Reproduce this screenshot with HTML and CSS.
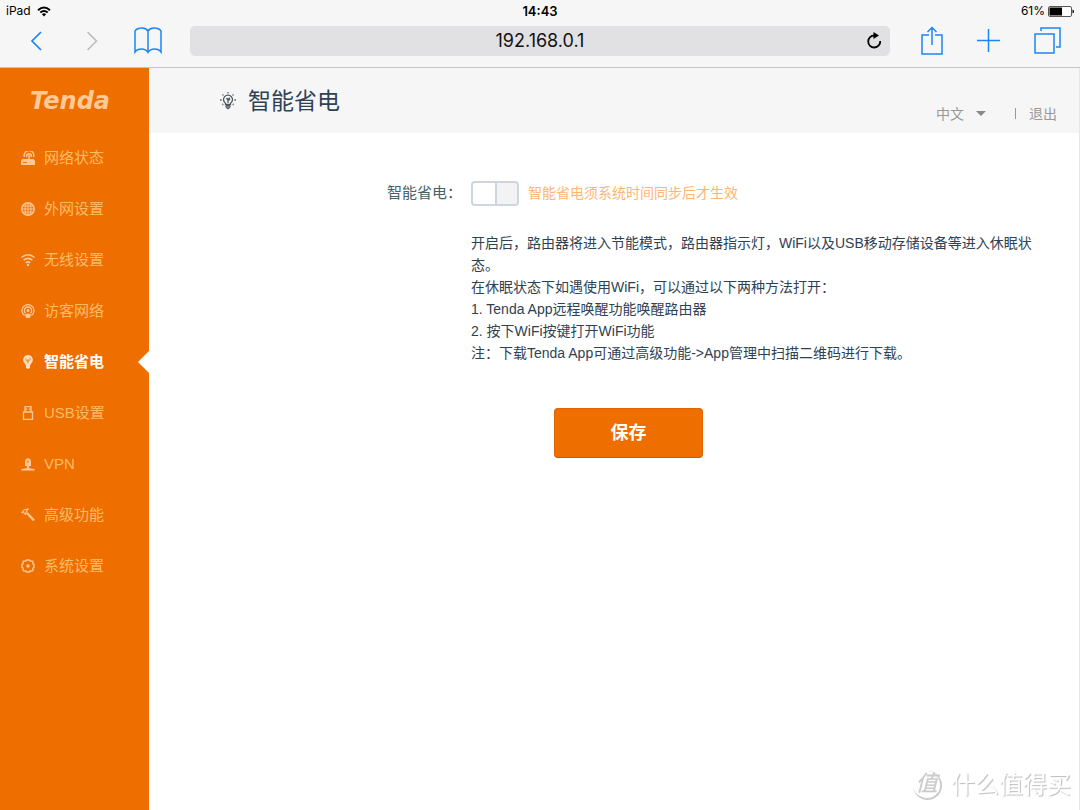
FILE: index.html
```html
<!DOCTYPE html>
<html lang="zh-CN">
<head>
<meta charset="utf-8">
<meta name="viewport" content="width=device-width, initial-scale=1">
<title>智能省电</title>
<link rel="stylesheet" href="styles.css">
</head>
<body>
<header class="browser">
  <div class="status">
    <div class="status-left"><span>iPad</span>
      <svg width="14" height="11" viewBox="0 0 14 11" fill="none" stroke="#000" stroke-width="2"><path d="M1 4.2Q7-1.2 13 4.2M3.3 6.6Q7 3.4 10.7 6.6"/><path d="M4.9 8.2Q7 6.4 9.1 8.2L7 10.6z" fill="#000" stroke="none"/></svg>
    </div>
    <div class="status-time">14:43</div>
    <div class="status-right"><span>61%</span>
      <svg width="26" height="11" viewBox="0 0 26 11"><rect x=".5" y=".5" width="23" height="10" rx="1.5" fill="#fff" stroke="#555"/><path d="M1.5 1.5h12.500v8H1.500z"/><path d="M24.500 3.500q1.500.5 1.500 2t-1.500 2z"/></svg>
    </div>
  </div>
  <div class="toolbar">
    <div class="tools-left">
      <button class="tool" aria-label="后退"><svg width="12" height="20" viewBox="0 0 12 20"><path d="M11 1L2 10l9 9" stroke-width="1.7"/></svg></button>
      <button class="tool forward" aria-label="前进"><svg width="12" height="20" viewBox="0 0 12 20"><path d="M1.500 1l9 9-9 9" stroke-width="1.5"/></svg></button>
      <button class="tool" aria-label="书签"><svg width="28" height="27" viewBox="0 0 28 27"><path d="M14 4Q12 1 8 1 3 1 1 4v21q2-3 6.500-3 4.500 0 6.500 3.500Q16 22 20.500 22q4.500 0 6.500 3V4q-2-3-7-3-4 0-6 3v21.500"/></svg></button>
    </div>
    <div class="address">
      <input class="url" type="text" value="192.168.0.1" aria-label="地址">
      <button class="reload" aria-label="刷新"><svg width="16" height="17" viewBox="0 0 16 17"><path d="M8.500 3.500A6 6 0 1 0 14.200 9" fill="none" stroke="#000" stroke-width="1.800"/><path d="M7.500 0l5.500 3.500L7.500 7z"/></svg></button>
    </div>
    <div class="tools-right">
      <button class="tool" aria-label="分享"><svg width="22" height="29" viewBox="0 0 22 29"><path d="M8 9H1v19h20V9h-7M11 19V1.500M6.500 6L11 1.500 15.500 6"/></svg></button>
      <button class="tool" aria-label="新标签页"><svg width="23" height="23" viewBox="0 0 23 23"><path d="M11.500 0v23M0 11.500h23"/></svg></button>
      <button class="tool" aria-label="标签页"><svg width="27" height="27" viewBox="0 0 27 27"><path d="M1 7h19v19H1zM7 4V1h19v19h-4"/></svg></button>
    </div>
  </div>
</header>

<div class="app">
  <aside class="sidebar">
    <div class="logo">Tenda</div>
    <nav class="menu">
      <a class="item" href="#"><svg class="icon" viewBox="0 0 14 14"><path class="solid" d="M1.500 8h11L14 9.500V14H0V9.500z"/><path d="M3.500 6a4.800 4.800 0 1 1 9 0M5.800 6a2.400 2.400 0 1 1 4.400 0M8 4v4" stroke-width="1.500"/><path d="M2 11.500h4" stroke="#ee6e00"/></svg>网络状态</a>
      <a class="item" href="#"><svg class="icon" viewBox="0 0 14 14"><circle cx="7" cy="7" r="6.200" stroke-width="1.500"/><ellipse cx="7" cy="7" rx="3" ry="6.200"/><path d="M7 1v12M1 7h12M1.800 4h10.400M1.800 10h10.400"/></svg>外网设置</a>
      <a class="item" href="#"><svg class="icon" viewBox="0 0 14 14"><path d="M.5 4.500q6.500-5.500 13 0M2.700 7.200q4.300-3.600 8.600 0M4.800 9.800q2.200-1.800 4.400 0" stroke-width="1.600"/><circle class="solid" cx="7" cy="12" r="1.300"/></svg>无线设置</a>
      <a class="item" href="#"><svg class="icon" viewBox="0 0 14 14"><path d="M3.500 11.500a6 6 0 1 1 7 0M4.500 9.200a3.600 3.600 0 1 1 5 0" stroke-width="1.300"/><circle class="solid" cx="7" cy="6.500" r="1.500"/><path class="solid" d="M4 10.500q3-2 6 0L9 14H5z"/></svg>访客网络</a>
      <a class="item current" href="#" aria-current="page"><svg class="icon" viewBox="0 0 14 14"><path class="solid" d="M7 0a4.900 4.900 0 0 1 3.400 8.300L9 10.500V13l-2 1-2-1v-2.500L3.600 8.300A4.900 4.900 0 0 1 7 0z"/><path d="M7 8.500V4M4.800 3.500Q4.500 6 7 6.500M8.800 2.500q1.200 3-1.800 3.500" stroke="#ee6e00" stroke-width=".8"/></svg>智能省电</a>
      <a class="item" href="#"><svg class="icon" viewBox="0 0 14 14"><path d="M4 6V.7h6V6M2.500 6h9v7.300h-9zM5.500 2.500v1.500M8.500 2.500v1.500" stroke-width="1.300"/></svg>USB设置</a>
      <a class="item" href="#"><svg class="icon" viewBox="0 0 14 14"><path class="solid" d="M4 5.500a3 4.200 0 0 1 6 0V9H8.200v2.300l5.300.7v1.500H.5V12l5.300-.7V9H4z"/><path d="M7 3.500v2.500" stroke="#ee6e00"/></svg>VPN</a>
      <a class="item" href="#"><svg class="icon" viewBox="0 0 14 14"><path d="M1 4.500L3.500 1.700 7 1 5.500 3.300 4.500 6.200 3 5z" stroke-width="1.200"/><path d="M6 5l7 7.500" stroke-width="2.400"/></svg>高级功能</a>
      <a class="item" href="#"><svg class="icon" viewBox="0 0 14 14"><path d="M5.500 1h3l.7 1.200 1.900-.3 1 1-.3 1.900L13 5.500v3l-1.200.7.3 1.900-1 1-1.900-.3-.7 1.200h-3l-.7-1.200-1.900.3-1-1 .3-1.900L1 8.500v-3l1.200-.7-.3-1.900 1-1 1.900.3z" stroke-width="1.400"/><circle class="solid" cx="7" cy="7" r="1.700"/></svg>系统设置</a>
    </nav>
  </aside>

  <div class="page">
    <header class="page-head">
      <h1 class="title"><svg width="16" height="18" viewBox="0 0 16 18" fill="none" stroke="#4b5966"><path d="M5.500 12.500v-1.200a4.500 4.500 0 1 1 5 0v1.200z" stroke-width="1.300"/><path d="M6 13.500h4v2L8 17l-2-1.500z" fill="#7a848d"/><path d="M8 11V6M6.500 6L8 8.500M9.500 5.500q.5 2.500-1.500 3" stroke-width="1.200"/><path d="M8 0v1.600M2.500 2.500l1 1M13.500 2.500l-1 1M0 8h1.800M14.200 8H16M2.300 13l1-1M13.700 13l-1-1" stroke="#8c949c" stroke-width="1.800"/></svg>智能省电</h1>
      <div class="account">
        <button class="language">中文<span class="caret"></span></button>
        <span class="divider"></span>
        <a class="logout" href="#">退出</a>
      </div>
    </header>
    <main class="content">
      <form class="form">
        <label class="label" for="saving">智能省电：</label>
        <div class="field">
          <input class="switch" type="checkbox" role="switch" id="saving">
          <span class="hint">智能省电须系统时间同步后才生效</span>
        </div>
        <div class="notes">
          <p>开启后，路由器将进入节能模式，路由器指示灯，WiFi以及USB移动存储设备等进入休眠状态。</p>
          <p>在休眠状态下如遇使用WiFi，可以通过以下两种方法打开：</p>
          <p>1. Tenda App远程唤醒功能唤醒路由器</p>
          <p>2. 按下WiFi按键打开WiFi功能</p>
          <p>注：下载Tenda App可通过高级功能-&gt;App管理中扫描二维码进行下载。</p>
        </div>
        <button class="save" type="button">保存</button>
      </form>
    </main>
  </div>
</div>
<div class="watermark"><span class="seal">值</span><span>什么值得买</span></div>
</body>
</html>
```

FILE: styles.css
```css
* { box-sizing: border-box; }

body {
  margin: 0;
  min-height: 100vh;
  display: flex;
  flex-direction: column;
  background: #fff;
  color: #2f4254;
  font: 14px/22px "Liberation Sans", "Noto Sans CJK SC", sans-serif;
}

button, input { font: inherit; margin: 0; }
button { padding: 0; border: 0; background: none; cursor: pointer; }
a { text-decoration: none; }
svg { display: block; flex: none; }

/* Browser bar */
.browser {
  background: #f6f6f6;
  border-bottom: 1px solid #c4c4c6;
  color: #000;
  font-family: Inter, "Liberation Sans", sans-serif;
}
.status {
  display: grid;
  grid-template-columns: 1fr auto 1fr;
  align-items: center;
  height: 22px;
  padding: 0 6px;
  font-size: 12px;
}
.status-left, .status-right { display: flex; align-items: center; gap: 6px; }
.status-right { justify-content: flex-end; gap: 3px; }
.status-time { font-size: 13px; font-weight: 600; }

.toolbar {
  display: flex;
  align-items: center;
  height: 45px;
  padding: 0 19px 8px 30px;
}
.tools-left, .tools-right { display: flex; align-items: center; }
.tools-left { gap: 44px; width: 160px; }
.tools-left .tool:last-child { margin-left: -8px; }
.tools-right { gap: 34px; margin-left: 31px; }
.tool svg { fill: none; stroke: #1b86f5; stroke-width: 1.5; }
.forward svg { stroke: #b9b9bb; }
.address { position: relative; flex: 1; }
.url {
  display: block;
  width: 100%;
  height: 30px;
  padding: 0 32px;
  border: 0;
  border-radius: 5px;
  background: #e1e1e3;
  color: #111;
  font-size: 18px;
  text-align: center;
}
.reload { position: absolute; right: 8px; top: 6px; }

/* Router pages */
.app { flex: 1; display: flex; }
.sidebar { width: 149px; flex: none; background: #ee6e00; }
.logo {
  padding: 20px 0 0 30px;
  height: 64px;
  color: #ffc998;
  font: italic 700 24px/26px "DejaVu Sans", sans-serif;
}
.item {
  position: relative;
  display: flex;
  align-items: center;
  gap: 9px;
  height: 51px;
  padding-left: 21px;
  color: #ffbb66;
  font-size: 15px;
}
.icon { width: 14px; height: 14px; fill: none; stroke: #ffc797; }
.icon .solid { fill: #ffc797; stroke: none; }
.current { color: #fff; font-weight: 700; }
.current .icon .solid { fill: #ffe0c2; }
.current::after {
  content: "";
  position: absolute;
  right: 0;
  border: solid transparent;
  border-width: 11px 11px 11px 0;
  border-right-color: #fff;
}

.page { flex: 1; min-width: 0; border-right: 1px solid #e6e6e6; }
.page-head {
  display: flex;
  justify-content: space-between;
  height: 65px;
  padding: 0 22px 0 71px;
  background: #f6f6f6;
}
.title {
  display: flex;
  align-items: center;
  gap: 12px;
  margin: 0;
  font-size: 23px;
  font-weight: 400;
}
.account {
  display: flex;
  align-items: center;
  padding-top: 26px;
  color: #999;
}
.language { display: flex; align-items: center; gap: 12px; color: inherit; }
.caret { border: solid transparent; border-width: 5px 5px 0; border-top-color: #888; }
.divider { width: 1px; height: 11px; margin: 0 13px 0 29px; background: #999; }
.logout { color: inherit; }

.content { padding: 44px 34px 44px 0; }
.form {
  display: grid;
  grid-template-columns: 305px minmax(0, 572px);
  column-gap: 17px;
}
.label {
  align-self: center;
  margin-right: -8px;
  color: #47616b;
  font-size: 15px;
  text-align: right;
}
.field { display: flex; align-items: center; gap: 9px; height: 32px; }
.switch {
  appearance: none;
  width: 48px;
  height: 25px;
  border: 2px solid #cdd6e0;
  border-radius: 4px;
  background: linear-gradient(90deg, #fff 50%, #cdd6e0 50% 54%, #f3f3f3 54%);
}
.switch:checked { background: linear-gradient(90deg, #ee6e00 50%, #fff 50%); }
.hint { color: #ffb574; }
.notes { grid-column: 2; margin-top: 23px; }
.notes p { margin: 0; }
.save {
  grid-column: 2;
  width: 149px;
  height: 50px;
  margin: 44px 0 0 83px;
  border: 1px solid #e06300;
  border-bottom-color: #cf5700;
  border-radius: 4px;
  background: #ee6e00;
  color: #fff;
  font-size: 18px;
  font-weight: 700;
}

.watermark {
  position: fixed;
  right: 9px;
  bottom: 7px;
  display: flex;
  align-items: center;
  gap: 9px;
  color: #fff;
  font-size: 24px;
  line-height: 36px;
  text-shadow: 1px 1px 1px #bbb;
}
.seal {
  width: 29px;
  height: 29px;
  border-right: 2px solid #ccc;
  border-bottom: 2px solid #ccc;
  border-radius: 50%;
  color: #ccc;
  font-size: 22px;
  font-weight: 500;
  font-style: italic;
  line-height: 26px;
  text-align: center;
  text-shadow: none;
}
```
